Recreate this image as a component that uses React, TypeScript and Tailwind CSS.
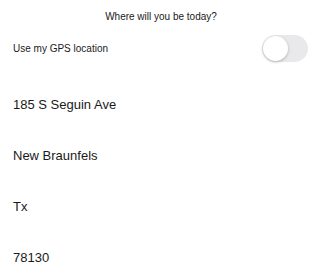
import React, { useState } from 'react';

const FIELDS = ['185 S Seguin Ave', 'New Braunfels', 'Tx', '78130'];

function Toggle({ on, onChange }: { on: boolean; onChange: (v: boolean) => void }) {
  return (
    <button
      onClick={() => onChange(!on)}
      className={`relative w-[46px] h-[27px] rounded-full transition-colors ${on ? 'bg-[#34c759]' : 'bg-[#e9e9eb]'}`}
    >
      <span
        className={`absolute top-[1px] left-[1px] w-[25px] h-[25px] rounded-full bg-white shadow-[0_1px_3px_rgba(0,0,0,0.25)] transition-transform ${on ? 'translate-x-[19px]' : ''}`}
      />
    </button>
  );
}

export default function App() {
  const [gps, setGps] = useState(false);

  return (
    <div className="w-[322px] h-[279px] bg-white text-[#1a1a1a] font-['Liberation_Sans',Arial,sans-serif] overflow-hidden">
      {/* Header */}
      <p className="pt-[11px] text-center text-[10px] leading-[12px]">Where will you be today?</p>

      {/* GPS row */}
      <div className="flex items-center justify-between pl-[13px] pr-[14px] mt-[12px]">
        <span className="text-[10px] leading-[12px]">Use my GPS location</span>
        <Toggle on={gps} onChange={setGps} />
      </div>

      {/* Address fields */}
      <div className="mt-[35px] flex flex-col">
        {FIELDS.map((f) => (
          <div key={f} className="h-[51px] pl-[13px] text-[13px] leading-[16px]">
            {f}
          </div>
        ))}
      </div>
    </div>
  );
}
